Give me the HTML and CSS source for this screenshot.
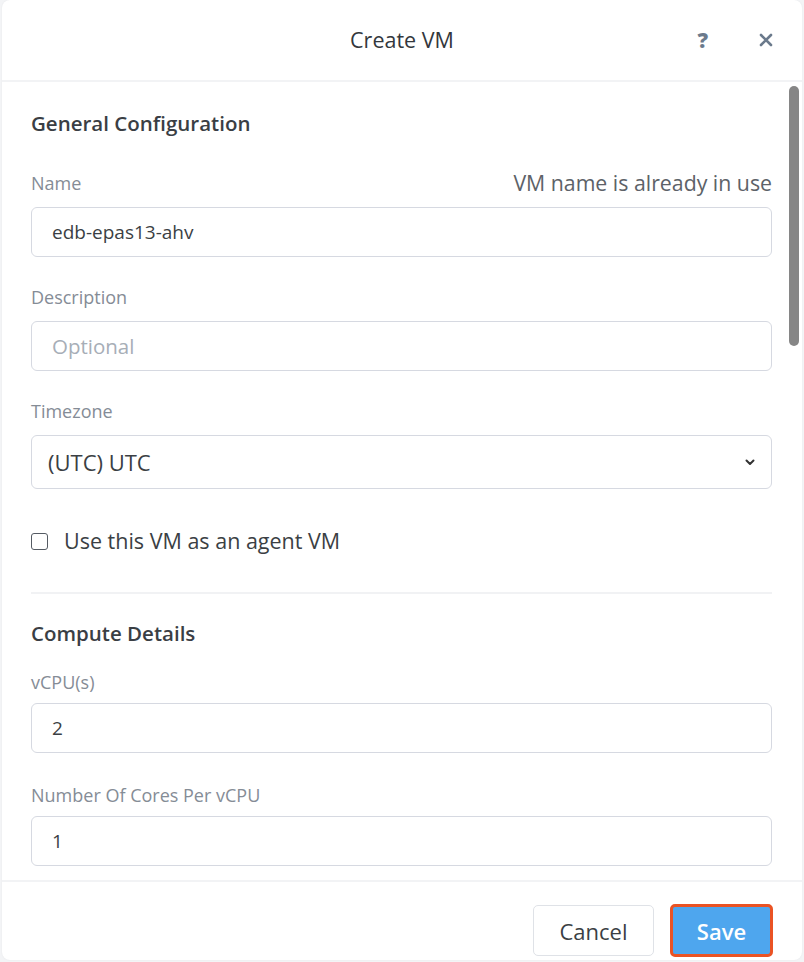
FILE: index.html
```html
<!DOCTYPE html>
<html>
<head>
<meta charset="utf-8">
<link rel="stylesheet" href="styles.css">
</head>
<body>
<div class="modal">
  <header class="modal-header">
    <h1 class="title">Create VM</h1>
    <div class="header-actions">
      <span class="help">?</span>
      <svg class="close" width="16" height="16" viewBox="0 0 16 16"><path d="M3 3 L13 13 M13 3 L3 13" stroke="#6b7a8c" stroke-width="2.6" stroke-linecap="round"/></svg>
    </div>
  </header>
  <div class="modal-body">
    <div class="scroll">
      <section class="section first">
        <h2 class="section-title">General Configuration</h2>
        <div class="field">
          <div class="label-row"><label class="label">Name</label><span class="hint">VM name is already in use</span></div>
          <div class="input">edb-epas13-ahv</div>
        </div>
        <div class="field">
          <div class="label-row"><label class="label">Description</label></div>
          <div class="input placeholder">Optional</div>
        </div>
        <div class="field last">
          <div class="label-row"><label class="label">Timezone</label></div>
          <div class="input select">(UTC) UTC
            <svg class="caret" width="10" height="7" viewBox="0 0 10 7"><path d="M1.5 1.5 L5 5 L8.5 1.5" fill="none" stroke="#333" stroke-width="2" stroke-linecap="round" stroke-linejoin="round"/></svg>
          </div>
        </div>
        <div class="check-row"><span class="checkbox"></span><span class="check-label">Use this VM as an agent VM</span></div>
      </section>
      <section class="section second">
        <h2 class="section-title">Compute Details</h2>
        <div class="field">
          <div class="label-row tight"><label class="label">vCPU(s)</label></div>
          <div class="input">2</div>
        </div>
        <div class="field">
          <div class="label-row tight"><label class="label">Number Of Cores Per vCPU</label></div>
          <div class="input">1</div>
        </div>
      </section>
    </div>
    <div class="scrollbar"></div>
  </div>
  <footer class="modal-footer">
    <button class="btn cancel">Cancel</button>
    <button class="btn save">Save</button>
  </footer>
</div>
</body>
</html>
```
FILE: styles.css
```css
html, body {
  margin: 0;
  padding: 0;
  height: 100%;
  background: #f3f4f6;
}
body {
  font-family: "Open Sans", Lato, sans-serif;
  color: #3a3f45;
}
.modal {
  height: 960px;
  margin: 0 2px 0 2px;
  background: #fff;
  border-radius: 8px;
  display: flex;
  flex-direction: column;
  overflow: hidden;
  box-shadow: 0 0 2px rgba(0,0,0,0.06);
}
.modal-header {
  height: 80px;
  flex: none;
  display: flex;
  align-items: center;
  justify-content: center;
  position: relative;
  border-bottom: 2px solid #f2f3f5;
}
.title {
  margin: 0;
  font-size: 21.5px;
  font-weight: 400;
  color: #33373c;
  line-height: 26px;
}
.header-actions {
  position: absolute;
  right: 28px;
  top: 27px;
  display: flex;
  align-items: center;
  gap: 50px;
}
.help {
  font-size: 21px;
  font-weight: 800;
  color: #6b7a8c;
  line-height: 26px;
}
.close { display: block; }
.modal-body {
  flex: 1;
  display: flex;
  overflow: hidden;
  position: relative;
}
.scroll {
  flex: 1;
  padding: 0 30px 0 29px;
}
.scrollbar {
  position: absolute;
  right: 3px;
  top: 4px;
  width: 10px;
  height: 260px;
  border-radius: 5px;
  background: #868686;
}
.section {
  padding-top: 30px;
  padding-bottom: 39px;
  border-bottom: 2px solid #f1f2f4;
}
.section.second {
  border-bottom: none;
  padding-top: 28px;
}
.section-title {
  margin: 0 0 38px;
  font-size: 20.5px;
  font-weight: 600;
  color: #3a3e44;
  line-height: 22px;
}
.second .section-title { margin-bottom: 27px; }
.field { margin-bottom: 29px; }
.second .field { margin-bottom: 31px; }
.field.last { margin-bottom: 0; }
.label-row {
  display: flex;
  justify-content: space-between;
  align-items: center;
  margin-bottom: 13px;
  height: 22px;
}
.label-row.tight { margin-bottom: 10px; }
.label {
  font-size: 18px;
  color: #858c96;
  line-height: 22px;
}
.hint {
  font-size: 21.3px;
  color: #5d6268;
  line-height: 22px;
}
.input {
  box-sizing: border-box;
  height: 50px;
  border: 1.5px solid #d6d9e1;
  border-radius: 6px;
  display: flex;
  align-items: center;
  padding: 0 20px;
  font-size: 19px;
  color: #3b3f44;
}
.input.placeholder { color: #a7aeb7; font-size: 20.5px; }
.input.select { justify-content: space-between; height: 54px; padding-left: 16px; font-size: 22px; }
.caret { display: block; margin-right: -4px; }
.check-row {
  display: flex;
  align-items: center;
  gap: 16px;
  margin-top: 40px;
  height: 24px;
}
.checkbox {
  box-sizing: border-box;
  width: 17px;
  height: 17px;
  border: 1.5px solid #555b63;
  border-radius: 3px;
  display: inline-block;
}
.check-label {
  font-size: 21.5px;
  color: #3b3f44;
  line-height: 24px;
}
.modal-footer {
  height: 80px;
  flex: none;
  border-top: 2px solid #f2f3f5;
  display: flex;
  justify-content: flex-end;
  align-items: flex-start;
  gap: 16px;
  padding: 22px 29px 0;
  box-sizing: border-box;
}
.btn {
  font-family: "Open Sans", Lato, sans-serif;
  font-size: 22px;
  border-radius: 5px;
  cursor: pointer;
  box-sizing: border-box;
  padding: 0;
}
.cancel {
  width: 121px;
  height: 51px;
  margin-top: 1px;
  background: #fff;
  border: 1.5px solid #dfe2e7;
  color: #3b3f44;
}
.save {
  width: 103px;
  height: 53px;
  background: #4ea6ee;
  border: 3px solid #ea5324;
  color: #fff;
  font-weight: 600;
}
```
